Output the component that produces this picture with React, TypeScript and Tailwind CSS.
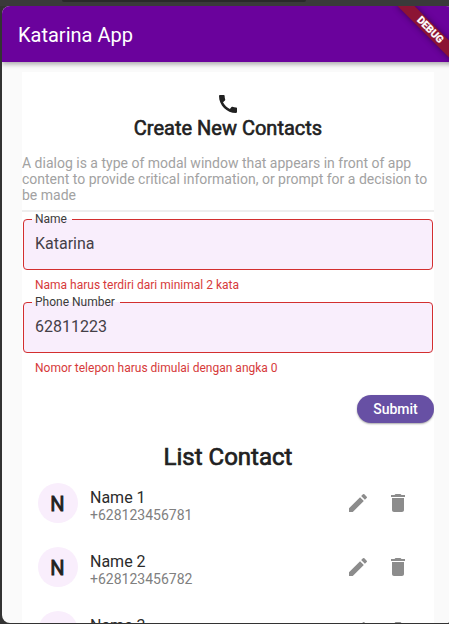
import { MdCall, MdDelete, MdEdit } from "react-icons/md";

type FieldProps = { label: string; value: string; error: string };

function Field({ label, value, error }: FieldProps) {
  return (
    <div className="h-[83px] px-px">
      <fieldset className="h-[58px] rounded border border-[#d32f2f] bg-[#f9eefc] pl-[11px]">
        <legend className="-ml-[3px] h-[15px] pl-[3px] pr-[5px] text-[12px] leading-[14px] text-[#3b3b3b]">
          {label}
        </legend>
        <div className="pt-[7px] text-[16px] leading-[20px] text-[#453f47]">{value}</div>
      </fieldset>
      <p className="pl-3 pt-2 text-[12px] leading-[14px] text-[#d63a3a]">{error}</p>
    </div>
  );
}

function Contact({ name, phone }: { name: string; phone: string }) {
  return (
    <li className="flex h-16 shrink-0 items-center pl-4 pr-6">
      <div className="flex size-10 items-center justify-center rounded-full bg-[#f9eefc] text-[20px] text-[#212121] [-webkit-text-stroke:0.8px_#212121]">
        <span className="pr-px pt-px">N</span>
      </div>
      <div className="ml-3 flex-1 pt-[6px]">
        <div className="relative top-px text-[16px] leading-[18px] text-[#2b2b2b]">{name}</div>
        <div className="text-[14px] leading-[18px] text-[#808080]">{phone}</div>
      </div>
      <div className="flex gap-4 text-[#8c8c8c]">
        <MdEdit size={24} />
        <MdDelete size={24} />
      </div>
    </li>
  );
}

const contacts = [
  { name: "Name 1", phone: "+628123456781" },
  { name: "Name 2", phone: "+628123456782" },
  { name: "Name 3", phone: "+628123456783" },
];

export default function App() {
  return (
    <div className="flex h-[624px] w-[449px] flex-col overflow-hidden bg-[#333] font-['Roboto',sans-serif]">
      <div className="h-[6px] shrink-0 bg-[#3a3a3a] pl-[62px]">
        <div className="h-[2px] w-[244px] rounded-b bg-[#292929]" />
      </div>
      <div className="relative ml-[2px] flex h-[617px] w-[452px] shrink-0 flex-col overflow-hidden rounded-lg bg-[#fafafa]">
        <header className="relative flex h-14 shrink-0 items-center bg-[#6a029c] pl-4 text-[20px] text-white shadow-[0_2px_5px_rgba(0,0,0,0.35)]">
          <h1 className="pt-[2px]">Katarina App</h1>
        </header>
        <div className="absolute left-[388px] top-[18px] h-3 w-20 rotate-45 bg-[#8c1434] text-center text-[10.2px] font-bold leading-[12px] text-white shadow-[0_0_6px_rgba(0,0,0,0.45)] [-webkit-text-stroke:0.3px_#fff]">
          DEBUG
        </div>
        <main className="ml-5 mt-[10px] flex w-[412px] flex-1 flex-col overflow-hidden bg-white pt-5">
          <MdCall size={24} className="shrink-0 self-center text-[#212121]" />
          <h2 className="text-center text-[20px] leading-[24px] text-[#212121] [-webkit-text-stroke:0.6px_#212121]">
            Create New Contacts
          </h2>
          <p className="mt-[15px] text-[14px] leading-[16px] text-[#a2a2a2]">
            A dialog is a type of modal window that appears in front of app content to provide critical information, or prompt for a decision to be made
          </p>
          <div className="mt-[7px] h-[2px] shrink-0 bg-[#eeeeee]" />
          <form className="shrink-0">
            <Field label="Name" value="Katarina" error="Nama harus terdiri dari minimal 2 kata" />
            <Field label="Phone Number" value="62811223" error="Nomor telepon harus dimulai dengan angka 0" />
            <div className="flex justify-end pt-[17px]">
              <button
                type="button"
                className="h-7 w-[77px] rounded-full bg-[#6750a4] text-[14px] font-medium text-white shadow-[0_1px_2px_rgba(0,0,0,0.35)]"
              >
                Submit
              </button>
            </div>
          </form>
          <h2 className="mt-5 text-center text-[24px] leading-[28px] text-[#212121] [-webkit-text-stroke:0.7px_#212121]">
            List Contact
          </h2>
          <ul className="flex flex-col">
            {contacts.map((c) => (
              <Contact key={c.name} {...c} />
            ))}
          </ul>
        </main>
      </div>
    </div>
  );
}
